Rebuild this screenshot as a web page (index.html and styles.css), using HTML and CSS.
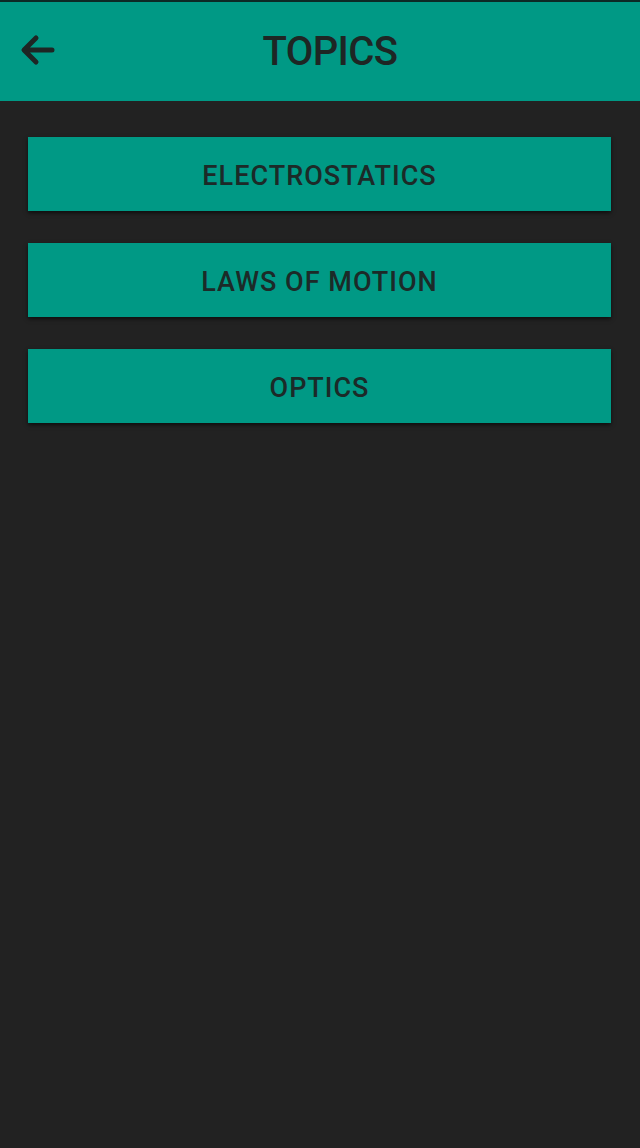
FILE: index.html
```html
<!DOCTYPE html>
<html lang="en">
<head>
    <meta charset="UTF-8">
    <meta name="viewport" content="width=device-width, initial-scale=1.0">
    <title>Topics</title>
    <link rel="stylesheet" href="styles.css">
</head>
<body>
    <div class="toolbar">
        <button class="back-btn" aria-label="Back">
            <svg width="36" height="32" viewBox="0 0 36 32">
                <path d="M33 16 H6 M17 4 L5 16 L17 28" fill="none" stroke="#1e2624" stroke-width="5" stroke-linecap="round" stroke-linejoin="round"/>
            </svg>
        </button>
        <h1 class="title">TOPICS</h1>
    </div>
    <div class="topic-list">
        <button class="topic">ELECTROSTATICS</button>
        <button class="topic">LAWS OF MOTION</button>
        <button class="topic">OPTICS</button>
    </div>
</body>
</html>
```

FILE: styles.css
```css
body {
    margin: 0;
    background: #222222;
    font-family: Roboto, "Noto Sans", sans-serif;
    height: 1148px;
}
.toolbar {
    height: 99px;
    background: #009985;
    border-top: 2px solid #0c2a26;
    display: flex;
    align-items: center;
    justify-content: center;
    padding-left: 20px;
    position: relative;
}
.back-btn {
    position: absolute;
    left: 19px;
    top: 32px;
    padding: 0;
    border: none;
    background: none;
    display: flex;
}
.title {
    margin: 0;
    font-size: 40px;
    font-weight: 500;
    letter-spacing: -0.6px;
    color: #1e2624;
}
.topic-list {
    display: flex;
    flex-direction: column;
    gap: 32px;
    padding: 36px 29px 0 28px;
}
.topic {
    height: 74px;
    border: none;
    background: #009985;
    color: #1c2a28;
    font-family: Roboto, "Noto Sans", sans-serif;
    font-size: 27px;
    font-weight: 500;
    letter-spacing: 1px;
    box-shadow: 0 2px 4px rgba(0, 0, 0, 0.6);
    padding: 3px 0 0;
}
```
